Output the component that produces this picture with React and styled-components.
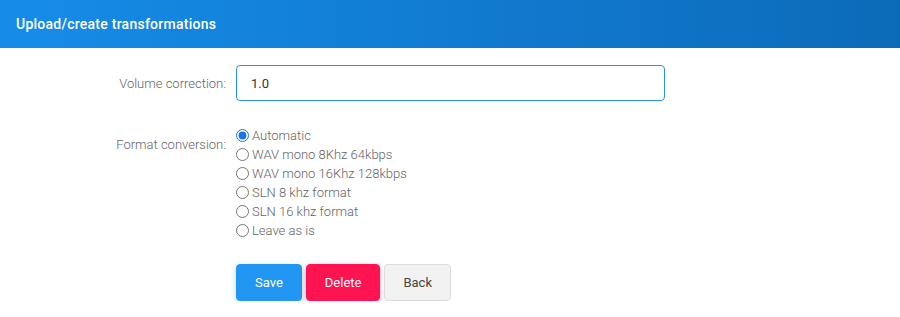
import React, { useState } from "react";
import styled, { createGlobalStyle } from "styled-components";

const GlobalStyle = createGlobalStyle`
  body {
    margin: 0;
    background: #fff;
    font-family: Roboto, "Liberation Sans", sans-serif;
  }
`;

const Header = styled.div`
  height: 48px;
  display: flex;
  align-items: center;
  padding: 0 16px;
  background: linear-gradient(90deg, #168ce9, #0c6bb9);
  color: #fff;
  font-size: 14px;
  font-weight: 500;
  letter-spacing: 0.25px;
`;

const Form = styled.div`
  display: grid;
  grid-template-columns: 226px 429px;
  column-gap: 10px;
  row-gap: 25px;
  padding-top: 17px;
`;

const Label = styled.div`
  text-align: right;
  font-size: 13px;
  font-weight: 300;
  color: #646464;
  align-self: ${(props) => (props.top ? "start" : "center")};
  padding-top: ${(props) => (props.top ? "11px" : "0")};
`;

const TextInput = styled.input`
  box-sizing: border-box;
  width: 429px;
  height: 36px;
  border: 1px solid #2a93ec;
  border-radius: 4px;
  padding: 0 14px;
  font-family: inherit;
  font-size: 13px;
  color: #333;
  outline: none;
`;

const RadioList = styled.div`
  display: flex;
  flex-direction: column;
`;

const RadioRow = styled.label`
  display: flex;
  align-items: center;
  height: 19px;
  font-size: 13px;
  font-weight: 300;
  color: #646464;
  input {
    margin: 0 3px 0 0;
    width: 13px;
    height: 13px;
    accent-color: #1a73e8;
  }
`;

const Buttons = styled.div`
  grid-column: 2;
  display: flex;
  gap: 4px;
  margin-top: -1px;
`;

const Button = styled.button`
  height: 37px;
  padding: 0 ${(props) => props.pad || 18}px;
  border-radius: 4px;
  font-family: inherit;
  font-size: 13px;
  cursor: pointer;
  border: 1px solid ${(props) => props.border || props.bg};
  background: ${(props) => props.bg};
  color: ${(props) => props.fg || "#fff"};
  box-shadow: ${(props) => props.shadow || "none"};
`;

const options = [
  "Automatic",
  "WAV mono 8Khz 64kbps",
  "WAV mono 16Khz 128kbps",
  "SLN 8 khz format",
  "SLN 16 khz format",
  "Leave as is",
];

const App = () => {
  const [value, setValue] = useState("1.0");
  const [format, setFormat] = useState(0);

  return (
    <>
      <GlobalStyle />
      <Header>Upload/create transformations</Header>
      <Form>
        <Label>Volume correction:</Label>
        <TextInput value={value} onChange={(e) => setValue(e.target.value)} />
        <Label top>Format conversion:</Label>
        <RadioList>
          {options.map((o, i) => (
            <RadioRow key={o}>
              <input
                type="radio"
                name="format"
                checked={format === i}
                onChange={() => setFormat(i)}
              />
              {o}
            </RadioRow>
          ))}
        </RadioList>
        <Buttons>
          <Button bg="#2196f3" shadow="0 2px 6px rgba(33,150,243,0.35)">Save</Button>
          <Button bg="#ff1350" shadow="0 2px 6px rgba(255,19,80,0.35)">Delete</Button>
          <Button bg="#f2f2f2" border="#dcdcdc" fg="#444">Back</Button>
        </Buttons>
      </Form>
    </>
  );
};

export default App;
